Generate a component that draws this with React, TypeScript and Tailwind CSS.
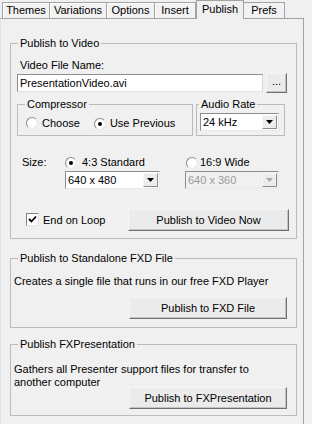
import React from 'react';

function Radio({ checked }: { checked?: boolean }) {
  return (
    <span className="inline-flex h-[12px] w-[12px] shrink-0 items-center justify-center rounded-full border border-[#8a8a8a] border-b-[#e6e6e6] border-r-[#e6e6e6] bg-white">
      {checked && <span className="h-[4px] w-[4px] rounded-full bg-black" />}
    </span>
  );
}

function Checkbox({ checked }: { checked?: boolean }) {
  return (
    <span className="inline-flex h-[13px] w-[13px] shrink-0 items-center justify-center border border-[#808080] border-b-[#e4e4e4] border-r-[#e4e4e4] bg-white">
      {checked && (
        <svg width="9" height="9" viewBox="0 0 9 9">
          <path d="M1 4 L3.5 6.5 L8 1.5" stroke="#000" strokeWidth="1.8" fill="none" />
        </svg>
      )}
    </span>
  );
}

function Button({ label, className }: { label: string; className: string }) {
  return (
    <div
      className={`flex items-center justify-center border border-[#f6f6f6] border-b-[#707070] border-r-[#707070] bg-[#ebebeb] text-black shadow-[inset_-1px_-1px_0_#c4c4c4] ${className}`}
    >
      {label}
    </div>
  );
}

function Select({ value, disabled, className }: { value: string; disabled?: boolean; className: string }) {
  return (
    <div
      className={`flex h-[18px] items-center border border-[#8e8e8e] border-b-[#e8e8e8] border-r-[#e8e8e8] ${disabled ? 'bg-[#f0f0f0] text-[#9a9a9a]' : 'bg-white text-black'} ${className}`}
    >
      <span className="flex-1 pl-[2px] leading-[13px]">{value}</span>
      <span className="mr-[1px] flex h-[14px] w-[15px] items-center justify-center border border-[#f8f8f8] border-b-[#8a8a8a] border-r-[#8a8a8a] bg-[#ececec]">
        <svg width="7" height="4" viewBox="0 0 7 4">
          <path d="M0 0 H7 L3.5 4 Z" fill={disabled ? '#a8a8a8' : '#000'} />
        </svg>
      </span>
    </div>
  );
}

const tabs = [
  { label: 'Themes', w: 'w-[47px]' },
  { label: 'Variations', w: 'w-[57px]' },
  { label: 'Options', w: 'w-[48px]' },
  { label: 'Insert', w: 'w-[42px]' }
];

export default function App() {
  return (
    <div className="relative h-[424px] w-[312px] overflow-hidden bg-[#f0f0f0] font-['Liberation_Sans',Arial,sans-serif] text-[11px] leading-[13px] text-black">
      {/* tab strip */}
      <div className="flex h-[18px] items-end pl-[2px]">
        {tabs.map((t, i) => (
          <div
            key={t.label}
            className={`flex h-[16px] items-center justify-center border-l border-t border-[#a3a3a3] bg-[#f2f2f2] shadow-[inset_1px_1px_0_#ffffff] ${t.w} ${i === tabs.length - 1 ? 'border-r' : ''}`}
          >
            {t.label}
          </div>
        ))}
        <div className="relative z-10 flex h-[19px] w-[48px] items-start justify-center self-start border-l border-r border-t border-[#a3a3a3] bg-[#f0f0f0] pt-[2px]">
          Publish
        </div>
        <div className="flex h-[16px] w-[41px] items-center justify-center border-r border-t border-[#a3a3a3] bg-[#f2f2f2]">
          Prefs
        </div>
      </div>

      {/* tab page */}
      <div className="h-[406px] w-[304px] border-l border-r border-t border-[#a3a3a3] border-l-[#e2e2e2] pl-[9px]">
        {/* Publish to Video */}
        <fieldset className="mt-[18px] w-[287px] border border-[#bcbcbc] px-0 pb-[7px]">
          <legend className="ml-[7px] px-[2px]">Publish to Video</legend>
          <div className="ml-[9px] mt-[9px]">Video File Name:</div>
          <div className="ml-[6px] mt-[1px] flex items-center gap-[3px]">
            <div className="flex h-[18px] w-[246px] items-center border border-[#8e8e8e] border-b-[#e3e3e3] border-r-[#d6d6d6] bg-white pl-[2px]">
              PresentationVideo.avi
            </div>
            <Button label="..." className="h-[20px] w-[21px] pb-[3px]" />
          </div>

          <div className="ml-[6px] mt-[5px] flex">
            <fieldset className="h-[38px] w-[176px] border border-[#bcbcbc] px-0">
              <legend className="ml-[7px] px-[2px]">Compressor</legend>
              <div className="ml-[8px] mt-[5px] flex items-center">
                <Radio />
                <span className="ml-[4px]">Choose</span>
                <span className="ml-[14px]">
                  <Radio checked />
                </span>
                <span className="ml-[4px]">Use Previous</span>
              </div>
            </fieldset>
            <fieldset className="ml-[3px] h-[38px] w-[89px] border border-[#bcbcbc] px-0">
              <legend className="ml-[2px] px-[2px]">Audio Rate</legend>
              <Select value="24 kHz" className="ml-[3px] mt-[2px] w-[79px]" />
            </fieldset>
          </div>

          <div className="mt-[20px] flex">
            <div className="w-[53px] pl-[11px]">Size:</div>
            <div className="w-[121px]">
              <div className="ml-[1px] flex items-center">
                <Radio checked />
                <span className="ml-[5px]">4:3 Standard</span>
              </div>
              <Select value="640 x 480" className="ml-[1px] mt-[2px] w-[95px]" />
            </div>
            <div>
              <div className="ml-[1px] flex items-center">
                <Radio />
                <span className="ml-[2px]">16:9 Wide</span>
              </div>
              <Select value="640 x 360" disabled className="mt-[2px] w-[94px]" />
            </div>
          </div>

          <div className="mt-[20px] flex items-center">
            <span className="ml-[15px]">
              <Checkbox checked />
            </span>
            <span className="ml-[4px]">End on Loop</span>
            <Button label="Publish to Video Now" className="ml-auto mr-[7px] h-[22px] w-[161px]" />
          </div>
        </fieldset>

        {/* Publish to Standalone FXD File */}
        <fieldset className="mt-[13px] w-[287px] border border-[#bcbcbc] px-0 pb-[8px]">
          <legend className="ml-[7px] px-[2px]">Publish to Standalone FXD File</legend>
          <div className="ml-[3px] mt-[10px]">Creates a single file that runs in our free FXD Player</div>
          <Button label="Publish to FXD File" className="ml-[118px] mt-[9px] h-[22px] w-[158px]" />
        </fieldset>

        {/* Publish FXPresentation */}
        <fieldset className="mt-[10px] w-[287px] border border-[#bcbcbc] px-0 pb-[6px]">
          <legend className="ml-[7px] px-[2px]">Publish FXPresentation</legend>
          <div className="ml-[3px] mt-[12px]">
            Gathers all Presenter support files for transfer to
            <br />
            another computer
          </div>
          <Button label="Publish to FXPresentation" className="relative ml-[118px] mt-[-2px] h-[22px] w-[158px]" />
        </fieldset>
      </div>
    </div>
  );
}
